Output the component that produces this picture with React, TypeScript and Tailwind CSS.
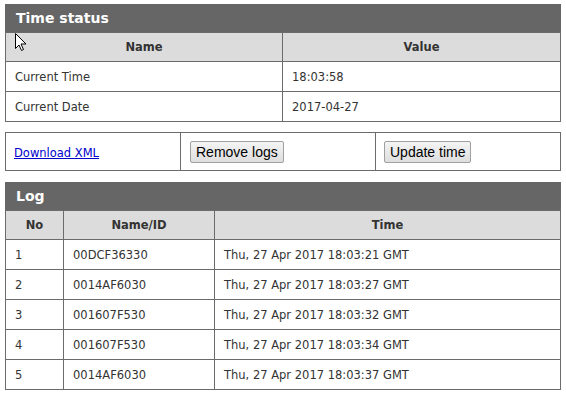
const logs = [
  { no: 1, id: "00DCF36330", time: "Thu, 27 Apr 2017 18:03:21 GMT" },
  { no: 2, id: "0014AF6030", time: "Thu, 27 Apr 2017 18:03:27 GMT" },
  { no: 3, id: "001607F530", time: "Thu, 27 Apr 2017 18:03:32 GMT" },
  { no: 4, id: "001607F530", time: "Thu, 27 Apr 2017 18:03:34 GMT" },
  { no: 5, id: "0014AF6030", time: "Thu, 27 Apr 2017 18:03:37 GMT" },
];

const th = "border border-[#6b6b6b] bg-[#dcdcdc] h-[29px] pt-[2px] text-center font-bold text-[#333] p-0";
const td = "border border-[#6b6b6b] h-[30px] px-[9px] pt-[2px] pb-0 text-[#333] align-middle";

function SectionTitle({ title }: { title: string }) {
  return (
    <div className="h-[28px] bg-[#666666] pl-[11px] flex items-center text-white font-bold text-[14px]">
      {title}
    </div>
  );
}

function Button({ label }: { label: string }) {
  return (
    <button
      type="button"
      className="h-[22px] px-[5px] border border-[#a0a0a0] rounded-[2px] bg-gradient-to-b from-[#f4f4f4] to-[#dedede] text-[14px] text-black font-['Liberation_Sans',Arial,sans-serif] leading-none"
    >
      {label}
    </button>
  );
}

export default function App() {
  return (
    <div className="relative w-[566px] h-[396px] bg-white font-['DejaVu_Sans',Verdana,sans-serif] text-[11.5px]">
      <div className="ml-[5px] w-[556px] pt-[4px]">
        <SectionTitle title="Time status" />
        <table className="w-full border-collapse table-fixed">
          <colgroup>
            <col className="w-[277px]" />
            <col />
          </colgroup>
          <thead>
            <tr>
              <th className={th}>Name</th>
              <th className={th}>Value</th>
            </tr>
          </thead>
          <tbody>
            <tr>
              <td className={td}>Current Time</td>
              <td className={td}>18:03:58</td>
            </tr>
            <tr>
              <td className={td}>Current Date</td>
              <td className={td}>2017-04-27</td>
            </tr>
          </tbody>
        </table>

        <table className="w-full border-collapse table-fixed mt-[10px]">
          <colgroup>
            <col className="w-[175px]" />
            <col className="w-[195px]" />
            <col />
          </colgroup>
          <tbody>
            <tr>
              <td className="border border-[#6b6b6b] h-[38px] px-[8px] pt-[4px] pb-0">
                <a href="#" className="text-[#0000cc] underline">
                  Download XML
                </a>
              </td>
              <td className="border border-[#6b6b6b] h-[38px] px-[9px] py-0">
                <Button label="Remove logs" />
              </td>
              <td className="border border-[#6b6b6b] h-[38px] px-[8px] py-0">
                <Button label="Update time" />
              </td>
            </tr>
          </tbody>
        </table>

        <div className="mt-[11px]">
          <SectionTitle title="Log" />
        </div>
        <table className="w-full border-collapse table-fixed">
          <colgroup>
            <col className="w-[58px]" />
            <col className="w-[151px]" />
            <col />
          </colgroup>
          <thead>
            <tr>
              <th className={th}>No</th>
              <th className={th}>Name/ID</th>
              <th className={th}>Time</th>
            </tr>
          </thead>
          <tbody>
            {logs.map((l) => (
              <tr key={l.no}>
                <td className={td}>{l.no}</td>
                <td className={td}>{l.id}</td>
                <td className={td}>{l.time}</td>
              </tr>
            ))}
          </tbody>
        </table>
      </div>

      <svg
        className="absolute left-[15px] top-[33px]"
        width="12"
        height="19"
        viewBox="0 0 12 19"
      >
        <path
          d="M0.5 0.5 L0.5 15.5 L4 12 L6.5 17.5 L8.5 16.5 L6 11 L11 11 Z"
          fill="white"
          stroke="black"
          strokeWidth="1"
          strokeLinejoin="round"
        />
      </svg>
    </div>
  );
}
